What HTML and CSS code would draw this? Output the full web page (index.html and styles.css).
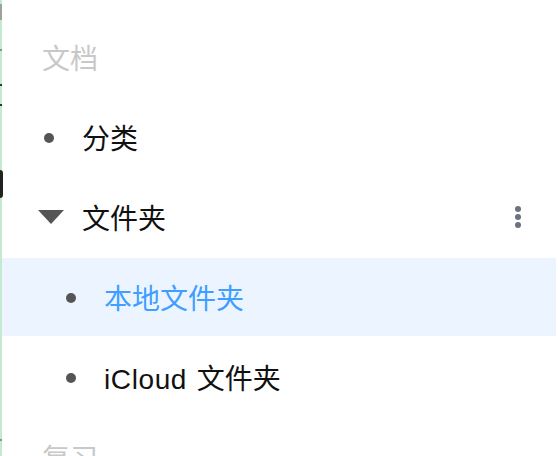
FILE: index.html
```html
<!DOCTYPE html>
<html lang="zh-CN">
<head>
<meta charset="utf-8">
<link rel="stylesheet" href="styles.css">
</head>
<body>
<div class="page">
  <div class="strip">
    <span class="mark m1"></span>
    <span class="mark m2"></span>
    <span class="mark m3"></span>
    <span class="mark m4"></span>
    <span class="mark m5"></span>
    <span class="mark m6"></span>
  </div>
  <nav class="sidebar">
    <div class="row header">文档</div>
    <div class="row">
      <span class="icon"><span class="dot"></span></span>
      <span class="label">分类</span>
    </div>
    <div class="row">
      <span class="icon"><span class="tri"></span></span>
      <span class="label">文件夹</span>
      <span class="kebab"><i></i><i></i><i></i></span>
    </div>
    <div class="row sub active">
      <span class="icon"><span class="dot"></span></span>
      <span class="label">本地文件夹</span>
    </div>
    <div class="row sub">
      <span class="icon"><span class="dot"></span></span>
      <span class="label"><span class="latin">iCloud</span> 文件夹</span>
    </div>
    <div class="row header">复习</div>
  </nav>
</div>
</body>
</html>
```
FILE: styles.css
```css
html, body {
  margin: 0;
  padding: 0;
  background: #fff;
}
body {
  width: 558px;
  height: 456px;
  overflow: hidden;
  font-family: "Liberation Sans", "Noto Sans CJK SC", sans-serif;
}
.page {
  display: flex;
  height: 456px;
}
.strip {
  width: 2px;
  flex: none;
  background: #c3ead0;
  display: flex;
  flex-direction: column;
  overflow: visible;
}
.mark {
  display: block;
  width: 2px;
  flex: none;
}
.m1 { margin-top: 4px; height: 16px; background: #9aa39c; }
.m2 { margin-top: 29px; height: 2px; background: #8a928c; }
.m3 { margin-top: 33px; height: 2px; background: #333; }
.m4 { margin-top: 18px; height: 2px; background: #333; }
.m5 { margin-top: 64px; height: 28px; width: 3px; background: #222; border-radius: 0 3px 3px 0; }
.m6 { margin-top: 241px; height: 2px; background: #8a928c; }
.sidebar {
  flex: 1;
  padding-top: 18px;
  display: flex;
  flex-direction: column;
}
.row {
  height: 78px;
  margin-bottom: 2px;
  flex: none;
  display: flex;
  align-items: center;
  padding-left: 40px;
  padding-right: 37px;
  font-size: 28px;
  color: #111;
}
.row.header {
  color: #c8c8c8;
}
.row.sub {
  padding-left: 62px;
}
.row.active {
  background: #ecf5ff;
  margin-right: 2px;
  padding-right: 35px;
}
.row.active .label {
  color: #409eff;
}
.icon {
  width: 40px;
  flex: none;
  display: flex;
  align-items: center;
}
.dot {
  width: 10px;
  height: 10px;
  border-radius: 50%;
  background: #555;
  margin-left: 2px;
  margin-top: 1px;
}
.tri {
  width: 0;
  height: 0;
  border-left: 13px solid transparent;
  border-right: 13px solid transparent;
  border-top: 14px solid #555;
  margin-left: -4px;
}
.label {
  flex: 1;
  white-space: nowrap;
}
.latin {
  letter-spacing: 0.6px;
  margin-right: 2px;
}
.kebab {
  display: flex;
  flex-direction: column;
  gap: 2px;
}
.kebab i {
  display: block;
  width: 6px;
  height: 6px;
  border-radius: 50%;
  background: #6b7280;
}
```
